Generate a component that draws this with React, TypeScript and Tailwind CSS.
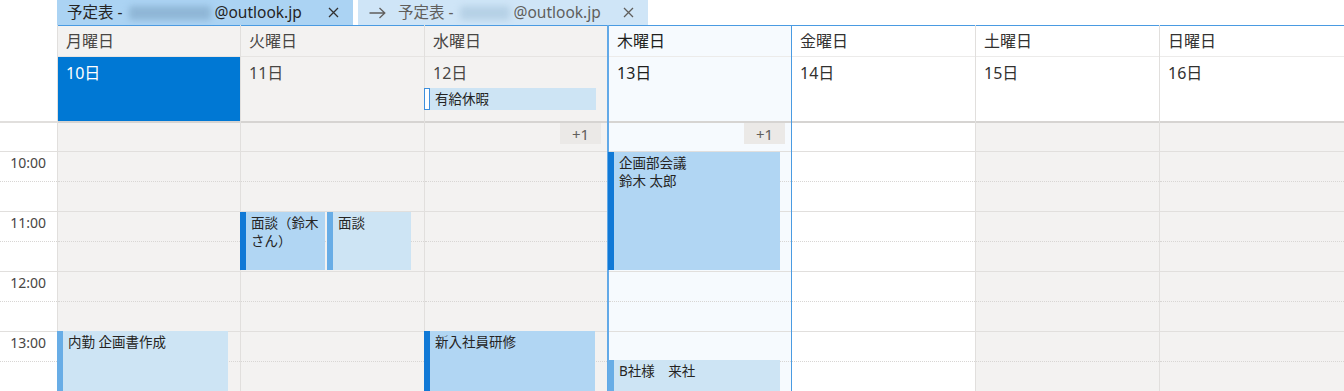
import React from "react";

const FONT = "[font-family:'Noto_Sans','Noto_Sans_CJK_JP',sans-serif]";

type Day = {
  name: string;
  date: string;
  head: string;
  dateBg: string;
  body: string;
  border: string;
  nameColor: string;
  dateColor: string;
};

const days: Day[] = [
  { name: "月曜日", date: "10日", head: "bg-[#f3f2f1]", dateBg: "bg-[#0078d4]", body: "bg-[#f3f2f1]", border: "border-l border-l-[#e1dfdd]", nameColor: "text-[#484644]", dateColor: "text-white" },
  { name: "火曜日", date: "11日", head: "bg-[#f3f2f1]", dateBg: "bg-[#f3f2f1]", body: "bg-[#f3f2f1]", border: "border-l border-l-[#e1dfdd]", nameColor: "text-[#484644]", dateColor: "text-[#484644]" },
  { name: "水曜日", date: "12日", head: "bg-[#f3f2f1]", dateBg: "bg-[#f3f2f1]", body: "bg-[#f3f2f1]", border: "border-l border-l-[#e1dfdd]", nameColor: "text-[#484644]", dateColor: "text-[#484644]" },
  { name: "木曜日", date: "13日", head: "bg-[#f6fafe]", dateBg: "bg-[#f6fafe]", body: "bg-[#f6fafe]", border: "border-l-2 border-l-[#62a9e7]", nameColor: "text-[#201f1e]", dateColor: "text-[#201f1e]" },
  { name: "金曜日", date: "14日", head: "bg-white", dateBg: "bg-white", body: "bg-white", border: "border-l border-l-[#4a9be2]", nameColor: "text-[#323130]", dateColor: "text-[#323130]" },
  { name: "土曜日", date: "15日", head: "bg-white", dateBg: "bg-white", body: "bg-[#f3f2f1]", border: "border-l border-l-[#e1dfdd]", nameColor: "text-[#323130]", dateColor: "text-[#323130]" },
  { name: "日曜日", date: "16日", head: "bg-white", dateBg: "bg-white", body: "bg-[#f3f2f1]", border: "border-l border-l-[#e1dfdd]", nameColor: "text-[#323130]", dateColor: "text-[#323130]" },
];

function CloseX({ color }: { color: string }) {
  return (
    <svg width="11" height="11" viewBox="0 0 11 11" className="shrink-0">
      <path d="M1 1 L10 10 M10 1 L1 10" stroke={color} strokeWidth="1.3" fill="none" />
    </svg>
  );
}

function Arrow() {
  return (
    <svg width="17" height="12" viewBox="0 0 17 12" className="shrink-0">
      <path d="M0.5 6 H15.5 M10.5 1 L15.8 6 L10.5 11" stroke="#605e5c" strokeWidth="1.3" fill="none" />
    </svg>
  );
}

function HourRow() {
  return (
    <div className="h-[60px] border-b border-b-[#e1dfdd]">
      <div className="h-[30px] border-b border-dotted border-b-[#d8d6d4]" />
    </div>
  );
}

function Event({
  top,
  height,
  left,
  width,
  dark,
  children,
}: {
  top: string;
  height: string;
  left: string;
  width: string;
  dark: boolean;
  children: React.ReactNode;
}) {
  return (
    <div className={`absolute flex ${top} ${height} ${left} ${width}`}>
      <div className={`w-[6px] shrink-0 ${dark ? "bg-[#1079d6]" : "bg-[#68ade6]"}`} />
      <div
        className={`flex-1 pl-[5px] pr-[3px] pt-[2px] text-[13.5px] leading-[18px] text-[#252423] ${
          dark ? "bg-[#b1d6f3]" : "bg-[#cde4f4]"
        }`}
      >
        {children}
      </div>
    </div>
  );
}

function Badge() {
  return (
    <div className="absolute right-[6px] top-0 flex h-[21px] w-[41px] items-center justify-center bg-[#ebe9e7] text-[15px] leading-[20px] text-[#605e5c]">
      +1
    </div>
  );
}

export default function App() {
  return (
    <div className={`h-[391px] w-[1344px] overflow-hidden bg-white ${FONT}`}>
      {/* tab bar */}
      <div className="flex h-[25px] pl-[57px]">
        <div className="flex h-full w-[296px] items-center bg-[#abd3f3] pl-[10px] pr-[14px] text-[15.5px] text-[#252423]">
          <span>予定表 -</span>
          <div className="ml-[6px] h-[14px] w-[82px] rounded-[3px] bg-[#8fb6d6] blur-[3px]" />
          <span className="ml-[4px]">@outlook.jp</span>
          <div className="ml-auto">
            <CloseX color="#323130" />
          </div>
        </div>
        <div className="ml-[5px] flex h-full w-[290px] items-center bg-[#cfe5f7] pl-[11px] pr-[14px] text-[15.5px] text-[#605e5c]">
          <Arrow />
          <span className="ml-[12px]">予定表 -</span>
          <div className="ml-[6px] h-[14px] w-[50px] rounded-[3px] bg-[#b6d1e6] blur-[3px]" />
          <span className="ml-[4px]">@outlook.jp</span>
          <div className="ml-auto">
            <CloseX color="#605e5c" />
          </div>
        </div>
      </div>

      {/* calendar grid */}
      <div className="grid grid-cols-[57px_183px_184px_183px_184px_184px_184px_185px]">
        {/* time column */}
        <div className="flex flex-col">
          <div className="h-[96px]" />
          <div className="h-[2px] bg-[#e1dfdd]" />
          <div className="h-[29px] border-b border-b-[#e1dfdd]" />
          {["10:00", "11:00", "12:00", "13:00"].map((t) => (
            <div key={t} className="relative h-[60px] border-b border-b-[#e1dfdd]">
              <div className="h-[30px] border-b border-dotted border-b-[#d8d6d4]" />
              <span className="absolute right-[11px] top-[1px] text-[14px] leading-[20px] text-[#484644]">
                {t}
              </span>
            </div>
          ))}
        </div>

        {days.map((d, i) => (
          <div key={d.name} className={`flex flex-col ${d.border}`}>
            <div className={`h-[31px] border-t border-t-[#4a9be2] pl-[8px] pt-[4px] text-[16px] leading-[22px] ${d.head} ${d.nameColor}`}>
              {d.name}
            </div>
            <div className={`h-px ${i < 3 ? "bg-[#e6e4e2]" : "bg-[#ecebea]"}`} />
            <div className={`h-[64px] pt-[5px] ${d.dateBg}`}>
              <div className={`pl-[8px] text-[16px] leading-[22px] ${d.dateColor}`}>{d.date}</div>
              {i === 2 && (
                <div className="mt-[4px] mr-[11px] -ml-px flex h-[22px] bg-[#cde4f4]">
                  <div className="w-[6px] shrink-0 border border-[#3d8fdd] bg-white" />
                  <span className="pl-[5px] text-[13.5px] leading-[22px] text-[#252423]">有給休暇</span>
                </div>
              )}
            </div>
            <div className="h-[2px] bg-[#d6d4d2]" />
            <div className={`relative h-[29px] border-b border-b-[#e1dfdd] ${d.body}`}>
              {(i === 2 || i === 3) && <Badge />}
            </div>
            <div className={`relative flex-1 ${d.body}`}>
              <HourRow />
              <HourRow />
              <HourRow />
              <HourRow />
              {i === 0 && (
                <Event top="top-[179px]" height="h-[90px]" left="-left-px" width="w-[171px]" dark={false}>
                  内勤 企画書作成
                </Event>
              )}
              {i === 1 && (
                <>
                  <Event top="top-[60px]" height="h-[58px]" left="-left-px" width="w-[85px]" dark={true}>
                    面談（鈴木さん）
                  </Event>
                  <Event top="top-[60px]" height="h-[58px]" left="left-[86px]" width="w-[84px]" dark={false}>
                    面談
                  </Event>
                </>
              )}
              {i === 2 && (
                <Event top="top-[179px]" height="h-[90px]" left="-left-px" width="w-[171px]" dark={true}>
                  新入社員研修
                </Event>
              )}
              {i === 3 && (
                <>
                  <Event top="top-0" height="h-[118px]" left="-left-px" width="w-[172px]" dark={true}>
                    企画部会議
                    <br />
                    鈴木 太郎
                  </Event>
                  <Event top="top-[208px]" height="h-[60px]" left="-left-px" width="w-[172px]" dark={false}>
                    B社様　来社
                  </Event>
                </>
              )}
            </div>
          </div>
        ))}
      </div>
    </div>
  );
}
